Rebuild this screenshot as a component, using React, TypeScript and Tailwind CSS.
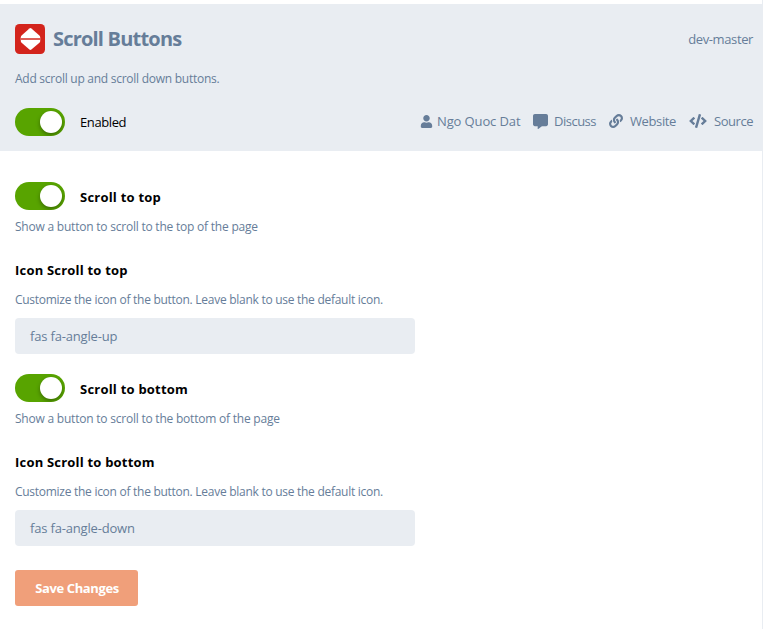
import { FaCode, FaCommentAlt, FaLink, FaUser } from "react-icons/fa";

function Toggle() {
  return (
    <span className="flex h-7 w-[50px] shrink-0 items-center justify-end overflow-hidden rounded-full bg-[#58a400] pr-[3px]">
      <span className="size-[22px] rounded-full bg-white shadow-[0_2px_4px_rgba(0,0,0,0.35)]" />
    </span>
  );
}

function Logo() {
  return (
    <svg width="30" height="30" viewBox="0 0 30 30" className="shrink-0">
      <rect width="30" height="30" rx="4.5" fill="#d3241c" />
      <path
        d="M14.4 4.4q1-.8 2 0L24.4 11.4q.8.8.8 1.8v4q0 .8-.8 1.6L16.4 25.6q-1 .8-2 0L6.6 18.8q-.8-.8-.8-1.6v-4q0-1 .8-1.8Z"
        fill="#fff"
      />
      <rect x="5.5" y="14" width="20" height="2" fill="#de5f59" />
    </svg>
  );
}

function Setting({ name, help, iconName, value, spacing }: {
  name: string;
  help: string;
  iconName: string;
  value: string;
  spacing: string;
}) {
  return (
    <section className={spacing}>
      <div className="flex h-7 items-center gap-[15px]">
        <Toggle />
        <span className="pt-[2px] text-[13px] leading-5 font-bold tracking-[0.22px] text-black">{name}</span>
      </div>
      <p className="mt-[7px] text-xs leading-[19px] tracking-[-0.22px]">{help}</p>
      <h3 className="mt-6 text-[13px] leading-5 font-bold tracking-[0.2px] text-black">{iconName}</h3>
      <p className="mt-2.5 text-xs leading-[19px] tracking-[-0.275px]">
        Customize the icon of the button. Leave blank to use the default icon.
      </p>
      <div className="mt-[9px] flex h-9 w-[400px] items-center rounded bg-[#e9edf2] px-[15px] text-[13px] leading-5 tracking-[-0.18px]">
        {value}
      </div>
    </section>
  );
}

export default function App() {
  return (
    <div className="h-[629px] w-[763px] overflow-hidden border-r border-[#e9edf2] bg-white pt-1 font-['Open_Sans','Noto_Sans',sans-serif] text-[#667d99]">
      <header className="h-[147px] bg-[#e9edf2] pt-5 pr-[9px] pl-[15px]">
        <div className="flex h-[30px] items-center">
          <Logo />
          <h1 className="ml-2 text-xl leading-[30px] font-bold tracking-[-0.8px]">Scroll Buttons</h1>
          <span className="ml-auto text-[13px] leading-5 tracking-[-0.38px]">dev-master</span>
        </div>
        <p className="mt-[15px] text-xs leading-[19px] tracking-[-0.26px]">Add scroll up and scroll down buttons.</p>
        <div className="mt-5 flex h-7 items-center">
          <Toggle />
          <span className="ml-[15px] text-[13px] leading-5 tracking-[-0.4px] text-black">Enabled</span>
          <nav className="ml-auto flex items-center pb-[2px] text-[13px] leading-5">
            <FaUser className="mr-1 size-[13px]" />
            <span className="w-[84px] tracking-[-0.12px] whitespace-nowrap">Ngo Quoc Dat</span>
            <FaCommentAlt className="mr-1.5 ml-3 size-[15px]" />
            <span className="w-[42px] tracking-[-0.5px]">Discuss</span>
            <FaLink className="mr-[7px] ml-[13px] size-[14px]" />
            <span className="w-[46px] tracking-[-0.38px]">Website</span>
            <FaCode className="mr-[7px] ml-[13px] h-[14px] w-[18px]" />
            <span className="w-[39px] tracking-[-0.45px]">Source</span>
          </nav>
        </div>
      </header>
      <main className="pl-[15px]">
        <Setting
          spacing="mt-[31px]"
          name="Scroll to top"
          help="Show a button to scroll to the top of the page"
          iconName="Icon Scroll to top"
          value="fas fa-angle-up"
        />
        <Setting
          spacing="mt-5"
          name="Scroll to bottom"
          help="Show a button to scroll to the bottom of the page"
          iconName="Icon Scroll to bottom"
          value="fas fa-angle-down"
        />
        <button className="mt-6 flex h-9 w-[123px] items-center justify-center rounded-[3px] bg-[#f09f7a] pl-px text-[13px] leading-5 font-bold tracking-[-0.38px] text-white">
          Save Changes
        </button>
      </main>
    </div>
  );
}
